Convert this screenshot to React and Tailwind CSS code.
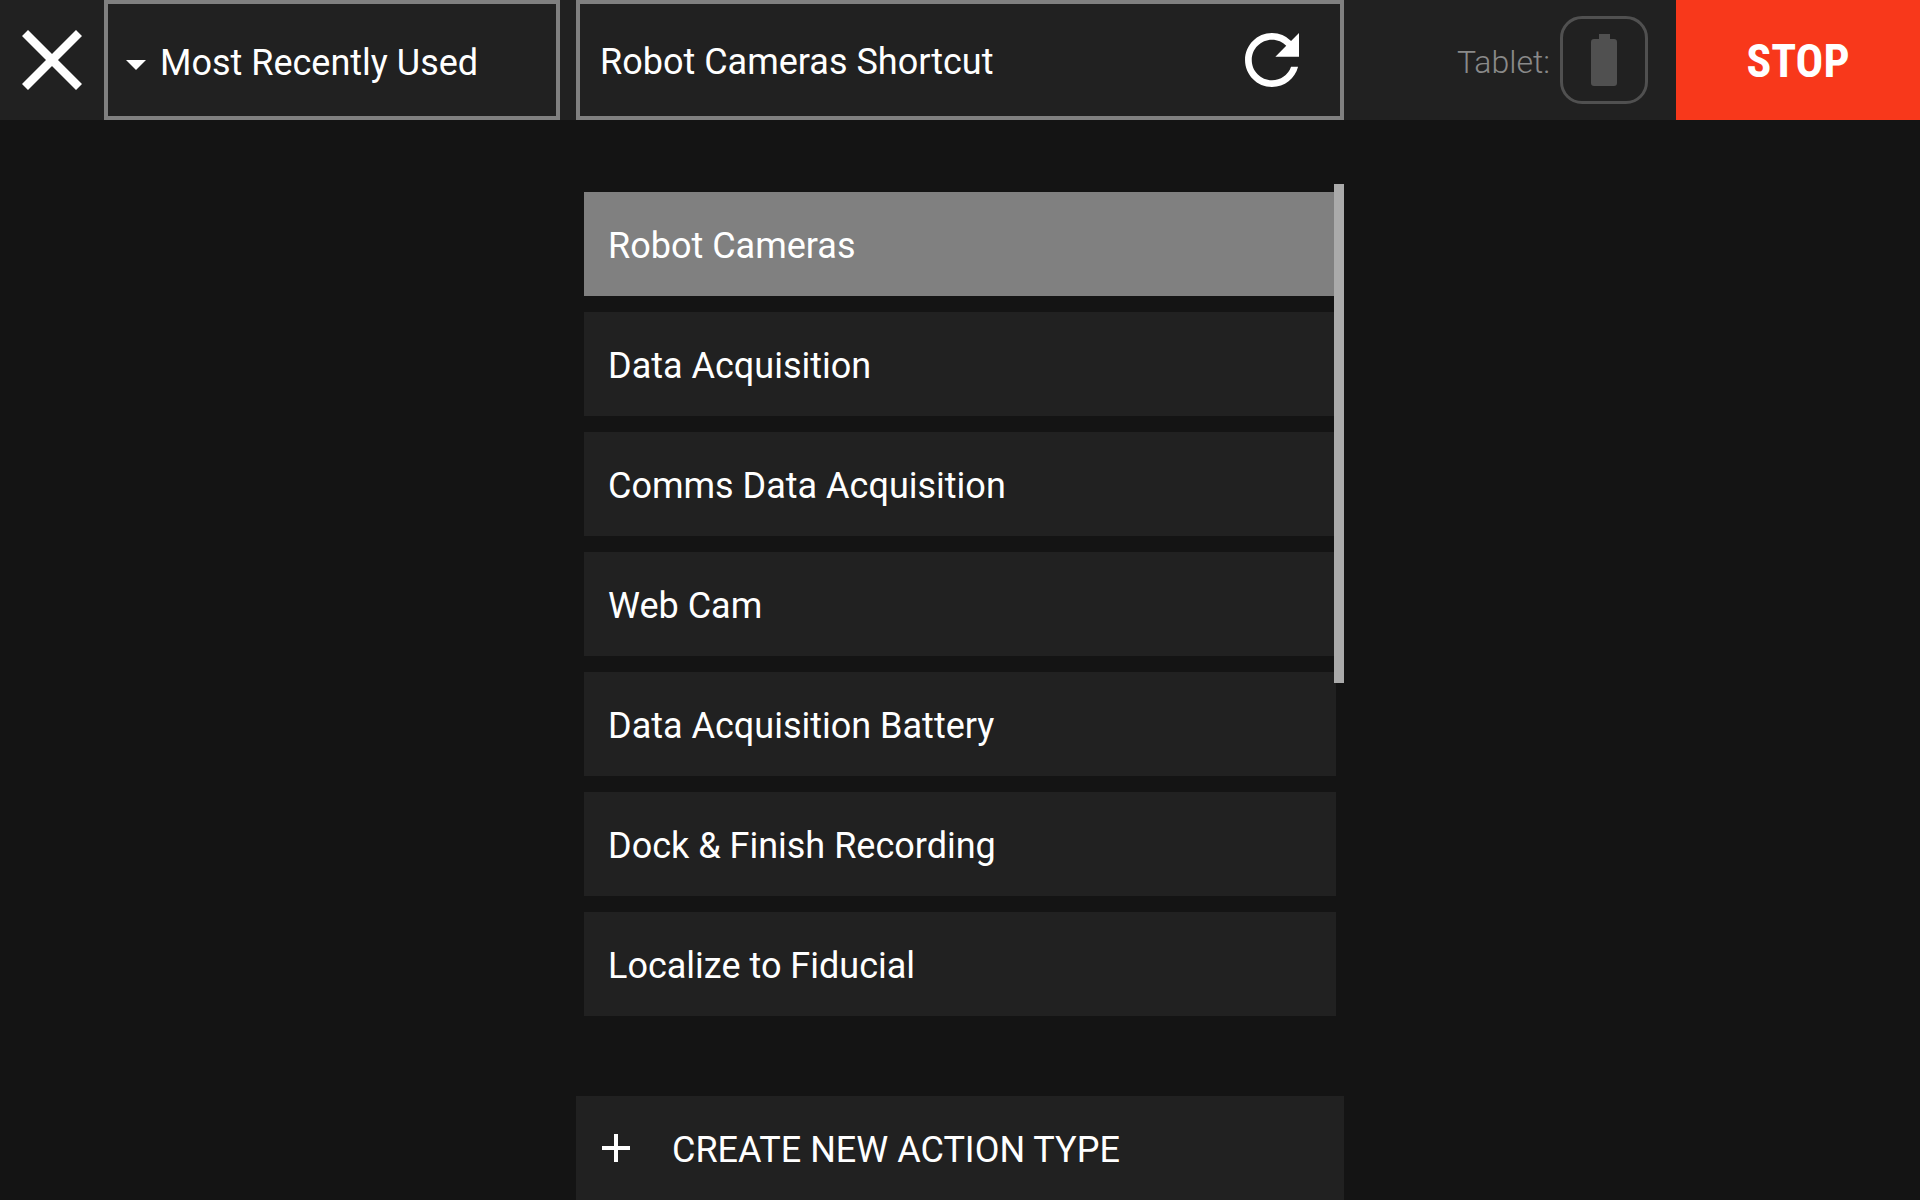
import { useState } from "react";

const ACTIONS = [
  "Robot Cameras",
  "Data Acquisition",
  "Comms Data Acquisition",
  "Web Cam",
  "Data Acquisition Battery",
  "Dock & Finish Recording",
  "Localize to Fiducial",
];

function CloseIcon() {
  return (
    <svg viewBox="0 0 60 60" className="h-[60px] w-[60px]" aria-hidden="true">
      <path d="M3 3 57 57M57 3 3 57" stroke="currentColor" strokeWidth="8.5" fill="none" />
    </svg>
  );
}

function RefreshIcon() {
  return (
    <svg viewBox="4 4 16 16" className="h-[54px] w-[54px]" aria-hidden="true">
      <path
        fill="currentColor"
        d="M17.65 6.35A7.958 7.958 0 0 0 12 4c-4.42 0-7.99 3.58-7.99 8s3.57 8 7.99 8c3.73 0 6.84-2.55 7.73-6h-2.08A5.99 5.99 0 0 1 12 18c-3.31 0-6-2.69-6-6s2.69-6 6-6c1.66 0 3.14.69 4.22 1.78L13 11h7V4l-2.35 2.35z"
      />
    </svg>
  );
}

function BatteryIcon() {
  return (
    <svg viewBox="0 0 26 52" className="h-[52px] w-[26px]" aria-hidden="true">
      <path
        fill="currentColor"
        d="M8 0h11v5h4a3 3 0 0 1 3 3v41a3 3 0 0 1-3 3H3a3 3 0 0 1-3-3V8a3 3 0 0 1 3-3h5z"
      />
    </svg>
  );
}

function PlusIcon() {
  return (
    <svg viewBox="0 0 28 28" className="h-7 w-7" aria-hidden="true">
      <path d="M14 0V28M0 14H28" stroke="currentColor" strokeWidth="4" fill="none" />
    </svg>
  );
}

function Header() {
  const [name, setName] = useState("Robot Cameras Shortcut");
  return (
    <header className="grid h-[120px] shrink-0 grid-cols-[3fr_4fr_3fr] bg-[#212121]">
      <div className="flex pr-4">
        <button type="button" aria-label="Close" className="flex w-[104px] shrink-0 items-center justify-center">
          <CloseIcon />
        </button>
        <div className="relative min-w-0 flex-1">
          <select
            aria-label="Sort order"
            className="h-full w-full appearance-none border-4 border-[#808080] bg-transparent pt-1.5 pl-[52px] text-4xl"
          >
            <option>Most Recently Used</option>
          </select>
          <svg
            viewBox="0 0 20 10"
            className="pointer-events-none absolute top-[60px] left-[22px] h-[10px] w-5"
            aria-hidden="true"
          >
            <path d="M0 0h20L10 10z" fill="currentColor" />
          </svg>
        </div>
      </div>
      <div className="flex items-center border-4 border-[#808080] pr-[41px] pl-5">
        <input
          type="text"
          aria-label="Action name"
          value={name}
          onChange={(e) => setName(e.target.value)}
          className="h-full min-w-0 flex-1 bg-transparent pt-1 text-4xl outline-none"
        />
        <button type="button" aria-label="Reset name">
          <RefreshIcon />
        </button>
      </div>
      <div className="flex justify-end">
        <div className="mr-7 flex items-center gap-2.5">
          <span className="pt-1 text-[32px] font-light text-[#8a8a8a]">Tablet:</span>
          <span className="flex h-[88px] w-[88px] items-center justify-center rounded-[22px] border-3 border-[#505050] text-[#505050]">
            <BatteryIcon />
          </span>
        </div>
        <button
          type="button"
          className="w-[244px] bg-[#f8381b] pt-0.5 font-['Roboto_Condensed','Liberation_Sans_Narrow',Roboto,sans-serif] text-[46px] font-bold"
        >
          STOP
        </button>
      </div>
    </header>
  );
}

export default function App() {
  const [selected, setSelected] = useState(0);
  return (
    <div className="flex min-h-screen flex-col bg-[#141414] font-[Roboto,sans-serif] text-white">
      <Header />
      <main className="mx-auto flex w-2/5 flex-1 flex-col justify-between pt-16">
        <div className="relative">
          <ul className="flex flex-col gap-4 px-2 pt-2">
            {ACTIONS.map((action, i) => (
              <li key={action}>
                <button
                  type="button"
                  aria-pressed={i === selected}
                  onClick={() => setSelected(i)}
                  className={
                    "h-[104px] w-full px-6 pt-1 text-left text-4xl " +
                    (i === selected ? "bg-[#808080]" : "bg-[#212121]")
                  }
                >
                  {action}
                </button>
              </li>
            ))}
          </ul>
          <div className="absolute top-0 right-0 h-3/5 w-[10px] bg-[#aaaaaa]" />
        </div>
        <button
          type="button"
          className="flex h-[104px] w-full items-center gap-[42px] bg-[#212121] pl-[26px] text-left text-4xl"
        >
          <PlusIcon />
          <span className="pt-1">CREATE NEW ACTION TYPE</span>
        </button>
      </main>
    </div>
  );
}
